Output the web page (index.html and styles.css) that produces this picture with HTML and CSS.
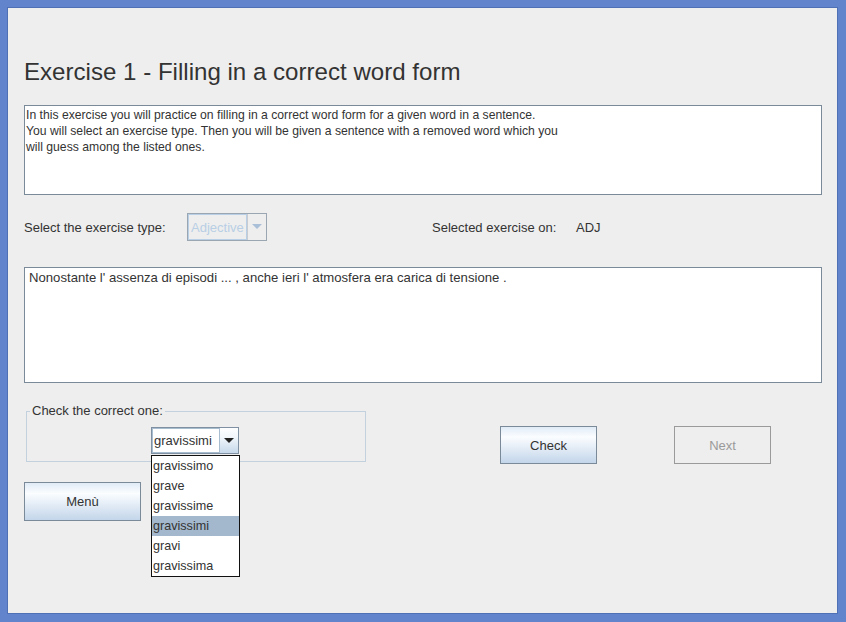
FILE: index.html
```html
<!DOCTYPE html>
<html>
<head>
<meta charset="utf-8">
<link rel="stylesheet" href="styles.css">
</head>
<body>
<div class="frame">
  <div class="panel">
    <h1 class="title">Exercise 1 - Filling in a correct word form</h1>
    <div class="textbox desc">In this exercise you will practice on filling in a correct word form for a given word in a sentence.<br>You will select an exercise type. Then you will be given a sentence with a removed word which you<br>will guess among the listed ones.</div>
    <div class="type-row">
      <span class="type-label">Select the exercise type:</span>
      <div class="combo combo-disabled">
        <span class="combo-field">Adjective</span>
        <span class="combo-btn"><svg width="10" height="6" viewBox="0 0 10 6"><path d="M0 0h10L5 5z" fill="#a9c0d8"/></svg></span>
      </div>
      <span class="selected-label">Selected exercise on:</span>
      <span class="selected-value">ADJ</span>
    </div>
    <div class="textbox sentence">Nonostante l' assenza di episodi ... , anche ieri l' atmosfera era carica di tensione .</div>
    <div class="answer-row">
      <fieldset class="group">
        <legend class="group-title">Check the correct one:</legend>
        <div class="combo combo-active">
          <span class="combo-field">gravissimi</span>
          <span class="combo-btn"><svg width="10" height="6" viewBox="0 0 10 6"><path d="M0 0h10L5 5z" fill="#222"/></svg></span>
          <ul class="popup">
            <li>gravissimo</li>
            <li>grave</li>
            <li>gravissime</li>
            <li class="sel">gravissimi</li>
            <li>gravi</li>
            <li>gravissima</li>
          </ul>
        </div>
      </fieldset>
      <button class="btn btn-check">Check</button>
      <button class="btn btn-next" disabled>Next</button>
    </div>
    <button class="btn btn-menu">Menù</button>
  </div>
</div>
</body>
</html>
```
FILE: styles.css
```css
* { box-sizing: border-box; }
html, body { margin: 0; padding: 0; }
body {
  font-family: "Liberation Sans", Arial, sans-serif;
  font-size: 13px;
  color: #333333;
  background: #6184cc;
}
.frame {
  width: 846px;
  height: 622px;
  border-style: solid;
  border-color: #6184cc;
  border-width: 7px 8px 8px 7px;
  background: #6184cc;
}
.panel {
  width: 100%;
  height: 100%;
  background: #eeeeee;
  border: 1px solid #4f70b4;
  padding: 0 0 0 16px;
  position: relative;
}
.title {
  margin: 50px 0 0 0;
  font-size: 24.1px;
  font-weight: normal;
  line-height: 28px;
  color: #333333;
}
.textbox {
  width: 798px;
  background: #ffffff;
  border: 1px solid #7a8a99;
  line-height: 16px;
}
.desc {
  margin-top: 19px;
  height: 90px;
  padding: 1px 0 0 1px;
  font-size: 12.2px;
}
.type-row {
  display: flex;
  align-items: center;
  margin-top: 18px;
  height: 28px;
}
.type-label { width: 163px; }
.combo {
  position: relative;
  display: flex;
  height: 28px;
  border: 1px solid #8a9aaa;
}
.combo-disabled {
  width: 80px;
  border-color: #9aa6b2;
}
.combo-disabled .combo-field {
  width: 59px;
  border: 1px solid #b8cfe5;
  color: #b8cfe5;
  padding-left: 2px;
  display: flex;
  align-items: center;
}
.combo-btn {
  flex: 1;
  display: flex;
  align-items: center;
  justify-content: center;
}
.combo-disabled .combo-btn { border-left: 1px solid #c8ccd0; }
.selected-label { margin-left: 165px; width: 144px; }
.sentence {
  margin-top: 26px;
  height: 116px;
  padding: 2px 0 0 4px;
  font-size: 13.15px;
}
.answer-row {
  display: flex;
  align-items: flex-start;
  margin-top: 21px;
  height: 58px;
}
.group {
  margin: 0 0 0 2px;
  padding: 0;
  width: 340px;
  height: 58px;
  border: 1px solid #c3d0de;
  border-radius: 0;
  min-width: 0;
}
.group-title {
  margin-left: 3px;
  padding: 0 2px 0 2px;
  line-height: 14px;
  font-size: 13px;
}
.combo-active {
  width: 88px;
  height: 27px;
  margin: 9px 0 0 124px;
  border-color: #7f90a3;
}
.combo-active .combo-field {
  width: 68px;
  border: 1px solid #a9bdd1;
  background: #ffffff;
  display: flex;
  align-items: center;
  padding-left: 1px;
  font-size: 13px;
  color: #333;
}
.combo-active .combo-btn {
  background: linear-gradient(#fdfeff 0%, #f2f7fc 35%, #c6d8ea 100%);
}
.popup {
  position: absolute;
  left: -1px;
  top: 27px;
  width: 89px;
  margin: 0;
  padding: 0;
  list-style: none;
  background: #ffffff;
  border: 1px solid #111111;
  z-index: 5;
}
.popup li {
  height: 20px;
  line-height: 20px;
  padding-left: 1px;
  font-size: 12.6px;
  color: #333;
}
.popup li.sel { background: #a3b8cc; }
.btn {
  font-family: "Liberation Sans", Arial, sans-serif;
  font-size: 13px;
  color: #333333;
  width: 97px;
  height: 38px;
  border: 1px solid #7a8a99;
  background: linear-gradient(#e0ebf6 0%, #fbfdff 28%, #e6eef7 55%, #c3d6ea 100%);
  padding: 0;
  border-radius: 0;
}
.btn-check { margin: 22px 0 0 134px; }
.btn-next {
  margin: 22px 0 0 77px;
  background: #eeeeee;
  border-color: #9a9a9a;
  color: #9a9a9a;
}
.btn-menu {
  display: block;
  margin-top: 20px;
  width: 117px;
  height: 39px;
}
```
